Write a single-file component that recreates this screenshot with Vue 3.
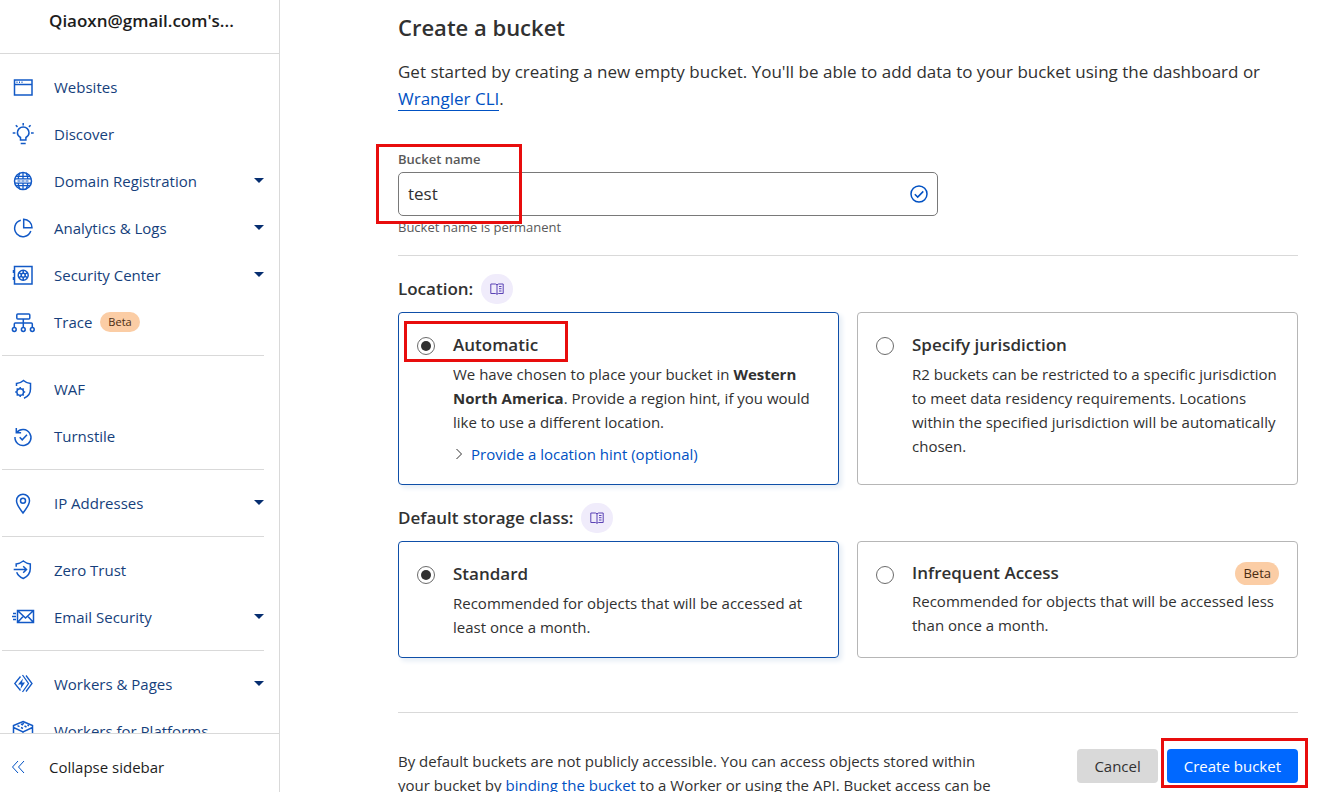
<template>
  <div class="layout">
    <aside class="sidebar">
      <div class="account">Qiaoxn@gmail.com's...</div>

      <nav class="nav">
        <ul v-for="(group, index) in navGroups" :key="index" class="nav-group">
          <li v-for="item in group" :key="item.label">
            <a href="#" class="nav-item">
              <svg class="nav-icon" viewBox="0 0 24 24" aria-hidden="true" v-html="icons[item.icon]" />
              <span>{{ item.label }}</span>
              <span v-if="item.beta" class="badge badge-small">Beta</span>
              <span v-if="item.children" class="caret" />
            </a>
          </li>
        </ul>
      </nav>

      <button type="button" class="collapse">
        <svg class="collapse-icon" viewBox="0 0 14 14" aria-hidden="true">
          <path d="M7 1 1.500 7 7 13M13 1 7.500 7 13 13" />
        </svg>
        Collapse sidebar
      </button>
    </aside>

    <main class="main">
      <h1 class="title">Create a bucket</h1>
      <p class="intro">
        Get started by creating a new empty bucket. You'll be able to add data to your bucket using the dashboard or
        <a href="#" class="intro-link">Wrangler CLI</a>.
      </p>

      <div class="field">
        <label for="bucket-name" class="field-label">Bucket name</label>
        <div class="field-control">
          <input id="bucket-name" v-model="bucketName" type="text" class="field-input" />
          <svg class="field-check" viewBox="0 0 18 18" aria-hidden="true">
            <circle cx="9" cy="9" r="8" />
            <path d="m4.800 9.300 2.900 2.800 5.600-5.700" />
          </svg>
        </div>
        <p class="field-help">Bucket name is permanent</p>
        <span class="mark mark-field" />
      </div>

      <hr class="divider" />

      <div class="section-head">
        <h2 id="location-title">Location:</h2>
        <a href="#" class="docs" aria-label="Location documentation">
          <svg viewBox="0 0 14 12" aria-hidden="true" v-html="icons.book" />
        </a>
      </div>
      <div class="cards" role="radiogroup" aria-labelledby="location-title">
        <div class="card" :class="{ selected: location === 'automatic' }">
          <input id="loc-auto" v-model="location" type="radio" value="automatic" class="radio" />
          <div class="card-body">
            <label for="loc-auto" class="card-title">Automatic</label>
            <p class="card-text">
              We have chosen to place your bucket in <strong>Western North America</strong>. Provide a region hint, if you would like to use a different location.
            </p>
            <button type="button" class="hint">
              <svg class="hint-arrow" viewBox="0 0 8 12" aria-hidden="true"><path d="m1.500 1 5 5-5 5" /></svg>
              Provide a location hint (optional)
            </button>
          </div>
          <span class="mark mark-option" />
        </div>
        <div class="card" :class="{ selected: location === 'jurisdiction' }">
          <input id="loc-jur" v-model="location" type="radio" value="jurisdiction" class="radio" />
          <div class="card-body">
            <label for="loc-jur" class="card-title">Specify jurisdiction</label>
            <p class="card-text">
              R2 buckets can be restricted to a specific jurisdiction to meet data residency requirements. Locations within the specified jurisdiction will be automatically chosen.
            </p>
          </div>
        </div>
      </div>

      <div class="section-head">
        <h2 id="storage-title">Default storage class:</h2>
        <a href="#" class="docs" aria-label="Storage class documentation">
          <svg viewBox="0 0 14 12" aria-hidden="true" v-html="icons.book" />
        </a>
      </div>
      <div class="cards" role="radiogroup" aria-labelledby="storage-title">
        <div class="card" :class="{ selected: storage === 'standard' }">
          <input id="st-standard" v-model="storage" type="radio" value="standard" class="radio" />
          <div class="card-body">
            <label for="st-standard" class="card-title">Standard</label>
            <p class="card-text">Recommended for objects that will be accessed at least once a month.</p>
          </div>
        </div>
        <div class="card" :class="{ selected: storage === 'infrequent' }">
          <input id="st-infrequent" v-model="storage" type="radio" value="infrequent" class="radio" />
          <div class="card-body">
            <div class="card-head">
              <label for="st-infrequent" class="card-title">Infrequent Access</label>
              <span class="badge">Beta</span>
            </div>
            <p class="card-text">Recommended for objects that will be accessed less than once a month.</p>
          </div>
        </div>
      </div>

      <hr class="divider divider-footer" />

      <footer class="footer">
        <p class="footer-text">
          By default buckets are not publicly accessible. You can access objects stored within your bucket by
          <a href="#">binding the bucket</a> to a Worker or using the API. Bucket access can be
        </p>
        <div class="actions">
          <button type="button" class="btn">Cancel</button>
          <div class="submit">
            <button type="button" class="btn btn-primary">Create bucket</button>
            <span class="mark mark-submit" />
          </div>
        </div>
      </footer>
    </main>
  </div>
</template>

<script setup>
import { ref } from 'vue'

const bucketName = ref('test')
const location = ref('automatic')
const storage = ref('standard')

const navGroups = [
  [
    { label: 'Websites', icon: 'window' },
    { label: 'Discover', icon: 'bulb' },
    { label: 'Domain Registration', icon: 'globe', children: true },
    { label: 'Analytics & Logs', icon: 'pie', children: true },
    { label: 'Security Center', icon: 'safe', children: true },
    { label: 'Trace', icon: 'tree', beta: true }
  ],
  [
    { label: 'WAF', icon: 'shieldGear' },
    { label: 'Turnstile', icon: 'turnstile' }
  ],
  [{ label: 'IP Addresses', icon: 'pin', children: true }],
  [
    { label: 'Zero Trust', icon: 'shieldArrow' },
    { label: 'Email Security', icon: 'mail', children: true }
  ],
  [
    { label: 'Workers & Pages', icon: 'workers', children: true },
    { label: 'Workers for Platforms', icon: 'platform' }
  ]
]

const icons = {
  window: '<path d="M3.500 5h17.500v15H3.500zM3.500 9.500h17.500"/><path d="M5.500 7.200h1M8 7.200h1M10.500 7.200h1"/>',
  bulb: '<path d="M9.500 18v-2.500C7.400 14.300 6.400 12.700 6.400 10.700a5.800 5.800 0 0 1 11.600 0c0 2-1 3.600-3.100 4.800V18zM9.700 21.500h5M12.200 1v2.400M1.700 11h2.700M20 11h2.700M4.800 3.200l1.700 1.700M19.600 3.200l-1.700 1.700"/>',
  globe: '<circle cx="12" cy="12" r="8.500"/><path stroke-width="1.300" d="M12 3.300V9.500M12 14.500v6.200M5 7.400h14M5 16.600h14M3.500 9.800h17M3.500 14.200h17M9 3.900C7.900 5.600 7.400 7.500 7.200 9.800M15 3.900c1.100 1.700 1.600 3.600 1.800 5.900M9 20.100C7.900 18.400 7.400 16.500 7.200 14.200M15 20.100c1.100-1.700 1.600-3.600 1.800-5.900"/><path stroke-width="1" d="M6.500 12h3M10.500 12h3M14.500 12h3"/>',
  pie: '<path d="M9.800 4.300A8.300 8.300 0 1 0 19.800 15"/><path d="M12.700 3.200v8.600h8.300a8.500 8.500 0 0 0-8.300-8.600z"/>',
  safe: '<path d="M3.500 3.500h17.500v17.500H3.500zM2.500 7v3M2.500 14v3"/><circle cx="12.200" cy="12.200" r="5"/><circle cx="12.200" cy="12.200" r="2"/><path d="M12.200 7.200v3M12.200 14.200v3M7.900 9.700l2.600 1.500M13.900 13.200l2.600 1.500M16.500 9.700l-2.600 1.500M10.500 13.200l-2.600 1.500"/>',
  tree: '<rect x="5.800" y="4" width="13" height="5" rx="1"/><path d="M12.300 9v8.500M3.300 17.500V14q0-1 1-1h16q1 0 1 1v3.500"/><circle cx="3.300" cy="19.500" r="1.900"/><circle cx="12.300" cy="19.500" r="1.900"/><circle cx="21.300" cy="19.500" r="1.900"/>',
  shieldGear: '<path d="M5.500 9V6.500C8.300 6.300 10.500 5.300 12.500 3.500c2 1.800 4 2.800 7 3V12c0 4.500-2 7.500-6.500 9.200"/><circle cx="9.200" cy="15" r="3.300"/><path d="M9.200 10v1.700M9.200 18.300V20M4.200 15h1.700M12.500 15h1.700M5.700 11.500l1.200 1.200M11.500 17.300l1.200 1.200M12.700 11.500l-1.200 1.200M6.900 17.300l-1.200 1.200"/>',
  turnstile: '<path d="M5.800 8.500A8 8 0 1 1 4 13"/><path d="M5.300 4v4.800h4.800M8.700 13.200l2.500 2.600 4.800-5"/>',
  pin: '<path d="M12 22C8.500 17.500 5.500 13.500 5.500 9.700a6.500 6.500 0 0 1 13 0c0 3.800-3 7.800-6.500 12.300z"/><circle cx="12" cy="9.700" r="2.500"/>',
  shieldArrow: '<path d="M5.200 8.800V6C8 5.700 10 4.700 12.300 3c2.200 1.700 4.200 2.700 7 3v4.500c0 5-2.600 8-7 10-3.300-1.500-5.600-3.500-6.600-6.300M2.700 11.500h12.600M12.200 8.300l3.300 3.200-3.300 3.200"/>',
  mail: '<path d="M6.500 5.500h16v12H6.500zM7 6l7.500 7L22 6M7 17l5.500-6M22 17l-5.500-6M2 8.500h3M1 11.500h4M2 14.500h3"/>',
  workers: '<path stroke-width="1.300" d="M9.500 4.500 3.800 11.500l5.700 7M11.500 3l6 8.500-6 8.500M15 3.500l6 8-6 8"/><path fill="currentColor" stroke="none" d="m12 6.500-5 6h3.300l-.8 4.500 4.500-6.500h-3z"/>',
  platform: '<path d="m12 2.500 9.500 4v10.500L12 22l-9.500-5V6.500zM2.500 6.500v2l9.500 4.500 9.500-4.500v-2M12 13V22"/><path d="m6.500 6.700 2 1M10 5l2 1M10 8.500l2 1M13.500 7l2 1M11.500 4l1.500.7M16.500 6l1.500.7"/>',
  book: '<path d="M7 1.500v9.500M.800 1h4.700L7 1.800 8.500 1h4.700v9.500H8.500L7 11.300l-1.500-.8H.800z"/><path d="M9 3.500h2.500M9 5.700h2.500M9 8h2.500"/>'
}
</script>

<style>
body {
  margin: 0;
  background: #fff;
}
</style>

<style scoped>
.layout {
  display: flex;
  height: 100vh;
  overflow: hidden;
  font-family: 'Open Sans', 'Noto Sans', sans-serif;
  font-size: 15px;
  line-height: 24px;
  color: #313131;
}

*,
*::before {
  box-sizing: border-box;
}

a {
  color: #0051c3;
  text-decoration: none;
}

button {
  font: inherit;
  border: 0;
  cursor: pointer;
}

svg {
  flex: none;
  fill: none;
  stroke: currentColor;
}

/* Sidebar */
.sidebar {
  display: flex;
  flex: none;
  flex-direction: column;
  width: 280px;
  border-right: 1px solid #d9d9d9;
}

.account {
  padding: 9px 16px 20px 49px;
  border-bottom: 1px solid #d9d9d9;
  font-size: 17px;
  font-weight: 600;
  color: #1d1d1d;
}

.nav {
  flex: 1;
  min-height: 0;
  padding-top: 9px;
  overflow: hidden;
}

.nav-group {
  margin: 0;
  padding: 0;
  list-style: none;
}

.nav-group + .nav-group {
  margin: 10px 15px 0 2px;
  padding-top: 9px;
  border-top: 1px solid #d9d9d9;
}

.nav-group + .nav-group .nav-item {
  padding-left: 9px;
  padding-right: 0;
}

.nav-item {
  display: flex;
  align-items: center;
  height: 47px;
  padding: 0 15px 0 11px;
  color: #163f7c;
}

.nav-icon {
  width: 24px;
  height: 24px;
  margin-right: 19px;
  color: #1259c6;
  stroke-width: 1.5;
}

.caret {
  margin-left: auto;
  border: 5px solid transparent;
  border-top-color: #062e70;
  border-bottom: 0;
}

.badge {
  padding: 0 8px;
  border-radius: 12px;
  background: #fbcda5;
  font-size: 13px;
  line-height: 23px;
  color: #4a2c12;
}

.badge-small {
  margin-left: 8px;
  font-size: 11px;
  line-height: 20px;
}

.collapse {
  display: flex;
  align-items: center;
  gap: 24px;
  height: 59px;
  padding: 8px 0 0 11px;
  border-top: 1px solid #d9d9d9;
  background: #fff;
  color: #1d1d1d;
}

.collapse-icon {
  width: 14px;
  height: 14px;
  color: #0051c3;
}

/* Main */
.main {
  flex: 1;
  min-width: 0;
  padding: 10px 45px 0 118px;
  overflow: hidden;
}

.title {
  margin: 0 0 14px;
  font-size: 22px;
  font-weight: 600;
  line-height: 34px;
}

.intro {
  margin: 0 0 37px;
  font-size: 17px;
  line-height: 27px;
}

.intro-link {
  border-bottom: 1px solid #0051c3;
}

.field {
  position: relative;
  max-width: 540px;
}

.field-label {
  display: block;
  margin-bottom: 3px;
  font-size: 13px;
  font-weight: 600;
  line-height: 20px;
  color: #595959;
}

.field-control {
  display: flex;
  align-items: center;
  height: 44px;
  padding: 0 9px;
  border: 1px solid #797979;
  border-radius: 5px;
}

.field-input {
  flex: 1;
  min-width: 0;
  padding: 0;
  border: 0;
  outline: 0;
  background: none;
  font: inherit;
  font-size: 17px;
  color: inherit;
}

.field-check {
  width: 18px;
  height: 18px;
  color: #0051c3;
  stroke-width: 1.5;
}

.field-help {
  margin: 1px 0 0;
  font-size: 13px;
  line-height: 20px;
  color: #595959;
}

.divider {
  height: 1px;
  margin: 18px 0 0;
  border: 0;
  background: #d9d9d9;
}

.divider-footer {
  margin-top: 54px;
}

.section-head {
  display: flex;
  align-items: center;
  gap: 8px;
  height: 30px;
  margin: 18px 0 8px;
}

.section-head h2 {
  margin: 0;
  font-size: 17px;
  font-weight: 600;
}

.docs {
  display: flex;
  align-items: center;
  justify-content: center;
  width: 32px;
  height: 30px;
  border-radius: 16px;
  background: #f0ecfb;
  color: #5b43b5;
}

.docs svg {
  width: 14px;
  height: 12px;
}

.cards {
  display: grid;
  grid-template-columns: 1fr 1fr;
  gap: 18px;
}

.card {
  position: relative;
  display: flex;
  gap: 18px;
  padding: 18px;
  border: 1px solid #b6b6b6;
  border-radius: 4px;
}

.card.selected {
  border-color: #0f4fa8;
  box-shadow: 3px 3px 5px #e6edf5;
}

.radio {
  display: grid;
  flex: none;
  place-content: center;
  width: 18px;
  height: 18px;
  margin: 6px 0 0;
  border: 1px solid #6b6b6b;
  border-radius: 50%;
  background: #fff;
  appearance: none;
}

.radio:checked::before {
  content: '';
  width: 10px;
  height: 10px;
  border-radius: 50%;
  background: #313131;
}

.card-body {
  flex: 1;
  min-width: 0;
}

.card-head {
  display: flex;
  align-items: center;
  justify-content: space-between;
}

.card-title {
  display: block;
  font-size: 17px;
  font-weight: 600;
  line-height: 28px;
}

.card-head .card-title {
  line-height: 26px;
}

.card-text {
  margin: 3px 0 0;
}

.hint {
  display: flex;
  align-items: center;
  gap: 8px;
  margin-top: 8px;
  padding: 0 0 0 2px;
  background: none;
  color: #0051c3;
}

.hint-arrow {
  width: 8px;
  height: 12px;
  color: #313131;
}

.footer {
  display: flex;
  justify-content: space-between;
  margin-top: 36px;
}

.footer-text {
  max-width: 612px;
  margin: 0;
}

.actions {
  display: flex;
  align-items: flex-start;
  gap: 9px;
}

.submit {
  position: relative;
}

.btn {
  height: 34px;
  padding: 0 17px;
  border-radius: 4px;
  background: #d9d9d9;
  color: #313131;
}

.btn-primary {
  background: #0068ff;
  color: #fff;
}

/* Red highlight frames laid over the form */
.mark {
  position: absolute;
  border: 3px solid #e80d0d;
  pointer-events: none;
}

.mark-field {
  top: -5px;
  left: -22px;
  width: 146px;
  height: 80px;
}

.mark-option {
  top: 8px;
  left: 5px;
  width: 164px;
  height: 41px;
}

.mark-submit {
  top: -11px;
  right: -10px;
  bottom: -5px;
  left: -6px;
}
</style>
